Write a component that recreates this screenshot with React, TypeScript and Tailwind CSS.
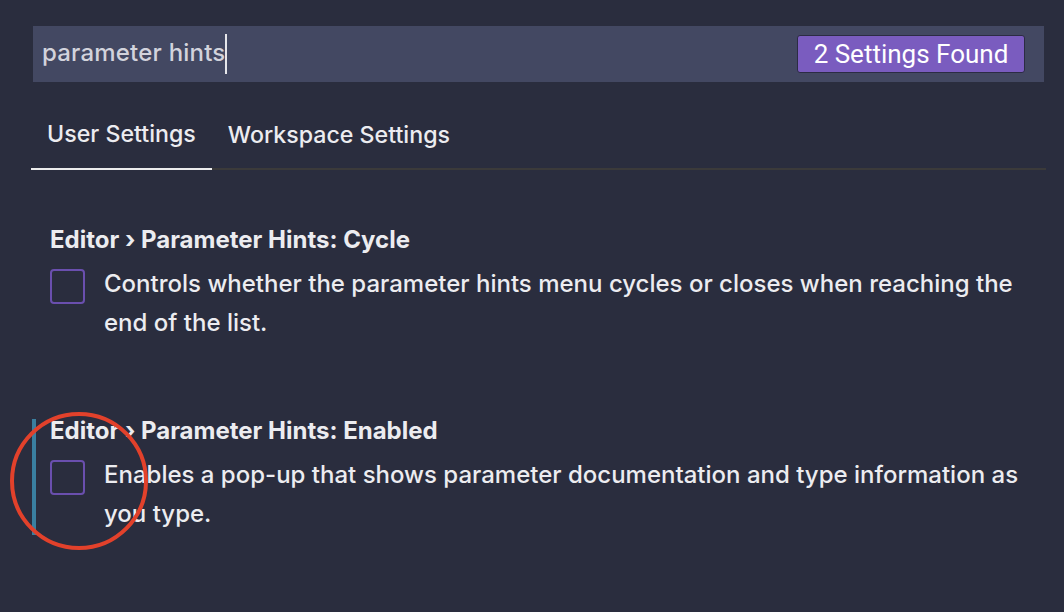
import React from "react";

export default function App() {
  return (
    <div
      className="relative w-[1064px] h-[612px] overflow-hidden bg-[#2a2d3e] text-[#ececf0]"
      style={{ fontFamily: "Inter, 'Noto Sans', sans-serif" }}
    >
      <div className="pt-[26px] pl-[33px] pr-[20px]">
        <div className="h-[56px] bg-[#434862] flex items-center justify-between pl-[9px] pr-[19px]">
          <div className="flex items-center text-[24px] tracking-[0.2px] font-medium text-[#d2d3dc]">
            <span className="-mt-[2px]">parameter hints</span>
            <span className="inline-block w-[2px] h-[40px] bg-[#e6e6ea]" />
          </div>
          <div
            className="h-[38px] w-[228px] flex items-center justify-center rounded-[3px] border border-[#2c2c44] bg-[#7a5cbf] text-white text-[26px]"
            style={{ fontFamily: "Roboto, sans-serif" }}
          >
            2 Settings Found
          </div>
        </div>
      </div>

      <div className="ml-[31px] mr-[18px] mt-[18px] flex border-b-2 border-[#3b3a3a] text-[23.2px] font-medium">
        <div className="h-[70px] -mb-[2px] px-[16px] flex items-center border-b-2 border-[#ececec]">
          User Settings
        </div>
        <div className="h-[70px] -mb-[2px] px-[16px] flex items-center">Workspace Settings</div>
      </div>

      <div className="ml-[32px] mr-[30px] mt-[58px] flex flex-col gap-[75px]">
        <Setting
          title="Editor › Parameter Hints: Cycle"
          desc="Controls whether the parameter hints menu cycles or closes when reaching the end of the list."
          focused={false}
        />
        <Setting
          title="Editor › Parameter Hints: Enabled"
          desc="Enables a pop-up that shows parameter documentation and type information as you type."
          focused={true}
        />
      </div>

      <div className="absolute left-[10px] top-[412px] w-[138px] h-[138px] rounded-full border-[4px] border-[#e2412b]" />
    </div>
  );
}

function Setting({ title, desc, focused }: { title: string; desc: string; focused: boolean }) {
  return (
    <div
      className={
        "border-l-4 pl-[14px] " + (focused ? "border-[#3a7fa0]" : "border-transparent")
      }
    >
      <div className="text-[24px] font-bold leading-[24px]">{title}</div>
      <div className="mt-[12px] pb-[2px] flex">
        <div className="mt-[5px] shrink-0 w-[35px] h-[35px] rounded-[4px] border-2 border-[#6a4fae]" />
        <div className="ml-[19px] text-[24px] font-medium leading-[39px]">{desc}</div>
      </div>
    </div>
  );
}
